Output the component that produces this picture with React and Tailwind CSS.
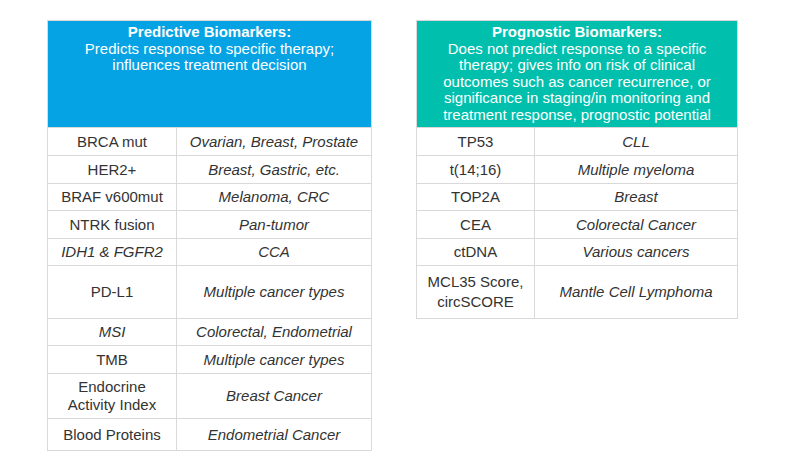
const PREDICTIVE = [
  { m: 'BRCA mut', c: 'Ovarian, Breast, Prostate', h: 'h-[28px]' },
  { m: 'HER2+', c: 'Breast, Gastric, etc.', h: 'h-[28px]' },
  { m: 'BRAF v600mut', c: 'Melanoma, CRC', h: 'h-[27px]' },
  { m: 'NTRK fusion', c: 'Pan-tumor', h: 'h-[28px]' },
  { m: 'IDH1 & FGFR2', c: 'CCA', h: 'h-[27px]', it: true },
  { m: 'PD-L1', c: 'Multiple cancer types', h: 'h-[53px]' },
  { m: 'MSI', c: 'Colorectal, Endometrial', h: 'h-[27px]', it: true },
  { m: 'TMB', c: 'Multiple cancer types', h: 'h-[28px]' },
  { m: <>Endocrine<br />Activity Index</>, c: 'Breast Cancer', h: 'h-[45px]', lead: 'leading-[18px]' },
  { m: 'Blood Proteins', c: 'Endometrial Cancer', h: 'h-[32px]' },
]

const PROGNOSTIC = [
  { m: 'TP53', c: 'CLL', h: 'h-[28px]' },
  { m: 't(14;16)', c: 'Multiple myeloma', h: 'h-[28px]' },
  { m: 'TOP2A', c: 'Breast', h: 'h-[27px]' },
  { m: 'CEA', c: 'Colorectal Cancer', h: 'h-[28px]' },
  { m: 'ctDNA', c: 'Various cancers', h: 'h-[27px]' },
  { m: <>MCL35 Score,<br />circSCORE</>, c: 'Mantle Cell Lymphoma', h: 'h-[53px]', lead: 'leading-[20px]' },
]

function BiomarkerTable({ title, desc, headBg, rows, widths, w }) {
  return (
    <table className={`${w} border-collapse table-fixed text-[15px] text-[#333333]`}>
      <colgroup>
        <col className={widths[0]} />
        <col className={widths[1]} />
      </colgroup>
      <thead>
        <tr>
          <th colSpan={2} className={`${headBg} h-[107px] align-top pt-[3px] px-1 border border-[#d9d9d9] text-white font-normal leading-[16.6px]`}>
            <div className="font-bold">{title}</div>
            {desc}
          </th>
        </tr>
      </thead>
      <tbody>
        {rows.map((r, i) => (
          <tr key={i} className={r.h}>
            <td className={`border border-[#d9d9d9] text-center align-middle px-1 ${r.lead || 'leading-[18px]'} ${r.it ? 'italic' : ''}`}>{r.m}</td>
            <td className="border border-[#d9d9d9] text-center align-middle px-1 italic leading-[18px]">{r.c}</td>
          </tr>
        ))}
      </tbody>
    </table>
  )
}

export default function App() {
  return (
    <div className="w-[810px] h-[456px] bg-white pt-[20px] pl-[47px] flex items-start gap-[44px] font-['Liberation_Sans',Arial,sans-serif]">
      <BiomarkerTable
        title="Predictive Biomarkers:"
        desc={<>Predicts response to specific therapy;<br />influences treatment decision</>}
        headBg="bg-[#05a3e3]"
        rows={PREDICTIVE}
        widths={['w-[129px]', 'w-[195px]']}
        w="w-[324px]"
      />
      <BiomarkerTable
        title="Prognostic Biomarkers:"
        desc={<>Does not predict response to a specific<br />therapy; gives info on risk of clinical<br />outcomes such as cancer recurrence, or<br />significance in staging/in monitoring and<br />treatment response, prognostic potential</>}
        headBg="bg-[#00bfad]"
        rows={PROGNOSTIC}
        widths={['w-[118px]', 'w-[203px]']}
        w="w-[321px]"
      />
    </div>
  )
}
